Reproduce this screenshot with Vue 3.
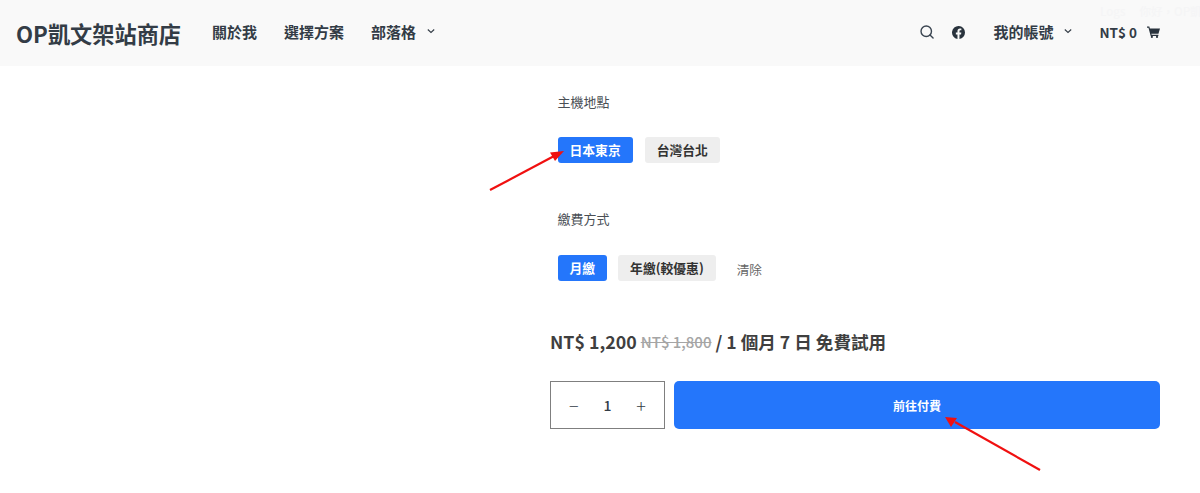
<script setup>
const nav = [
  { label: '關於我' },
  { label: '選擇方案' },
  { label: '部落格', caret: true }
]
</script>

<template>
  <div class="page">
    <header class="header">
      <div class="ghost">Logs<span>你好，OP凱</span></div>
      <div class="brand">OP凱文架站商店</div>
      <nav class="nav">
        <a v-for="item in nav" :key="item.label" class="nav-item">
          {{ item.label }}
          <svg v-if="item.caret" class="caret" viewBox="0 0 8 8"><path d="M.8 2.500 4 5.500 7.200 2.500" fill="none" stroke="currentColor" stroke-width="1.100" /></svg>
        </a>
      </nav>
      <div class="tools">
        <svg class="icon search" viewBox="0 0 15 15"><circle cx="6.700" cy="6.700" r="5.600" fill="none" stroke="#3a4551" stroke-width="1.500" /><path d="M10.700 10.700 14 14" stroke="#3a4551" stroke-width="1.500" stroke-linecap="round" /></svg>
        <svg class="icon fb" viewBox="0 0 24 24"><path fill="#29333d" d="M24 12a12 12 0 1 0-13.900 11.900v-8.400H7.100V12h3V9.400c0-3 1.800-4.700 4.500-4.700 1.300 0 2.700.2 2.700.2v3h-1.500c-1.500 0-2 .9-2 1.900V12h3.400l-.5 3.500h-2.900v8.400A12 12 0 0 0 24 12z" /></svg>
        <a class="nav-item account">我的帳號
          <svg class="caret" viewBox="0 0 8 8"><path d="M.8 2.500 4 5.500 7.200 2.500" fill="none" stroke="currentColor" stroke-width="1.100" /></svg>
        </a>
        <a class="cart">NT$ 0
          <svg class="cart-icon" viewBox="0 0 24 22"><path fill="#29333d" d="M0 1h4.300l1 3.500H24l-2.800 9.500H8l.6 2H21v2.200H6.800L2.700 3.200H0z" /><circle cx="9" cy="20" r="2" fill="#29333d" /><circle cx="18.500" cy="20" r="2" fill="#29333d" /></svg>
        </a>
      </div>
    </header>

    <main class="product">
      <section class="option first">
        <div class="label">主機地點</div>
        <div class="choices">
          <button class="choice active">日本東京</button>
          <button class="choice">台灣台北</button>
        </div>
      </section>
      <section class="option second">
        <div class="label">繳費方式</div>
        <div class="choices">
          <button class="choice active">月繳</button>
          <button class="choice">年繳(較優惠)</button>
          <span class="clear">清除</span>
        </div>
      </section>
      <div class="price">
        <span class="now">NT$ 1,200</span>
        <del>NT$ 1,800</del>
        <span>/ 1 個月 7 日 免費試用</span>
      </div>
      <div class="buy">
        <div class="qty">
          <span class="step">−</span>
          <span class="num">1</span>
          <span class="step">+</span>
        </div>
        <button class="pay">前往付費</button>
      </div>
    </main>

    <svg class="notes" viewBox="0 0 1200 493" width="1200" height="493">
      <g stroke="#f01010" stroke-width="2.200" fill="#f01010">
        <path d="M490 190 556 155" />
        <path stroke="none" d="M564 151 550 152.500 555 161z" />
        <path d="M1040 470 955 422" />
        <path stroke="none" d="M945 417 951 427 957 418z" />
      </g>
    </svg>
  </div>
</template>

<style scoped>
.page {
  position: relative;
  width: 1200px;
  height: 493px;
  overflow: hidden;
  background: #fff;
  font-family: "Noto Sans CJK TC", "Noto Sans", sans-serif;
  color: #3a4551;
}
.header {
  position: relative;
  display: flex;
  align-items: center;
  height: 66px;
  padding: 0 40px 0 16px;
  box-sizing: border-box;
  background: #f9f9f9;
}
.ghost {
  position: absolute;
  top: 3px;
  left: 1100px;
  white-space: nowrap;
  font-size: 11.500px;
  line-height: 16px;
  font-weight: 500;
  color: #f5f5f6;
}
.ghost span { margin-left: 14px; }
.brand {
  font-size: 22.200px;
  line-height: 30px;
  font-weight: 700;
  color: #333c46;
  margin-right: 31px;
  margin-top: -1px;
}
.nav { display: flex; gap: 27px; }
.nav-item {
  display: flex;
  align-items: center;
  margin-top: -2px;
  font-size: 15px;
  line-height: 22px;
  font-weight: 700;
  color: #333c46;
  white-space: nowrap;
}
.caret { width: 8px; height: 8px; margin-left: 11px; margin-top: -3px; }
.tools { display: flex; align-items: center; margin-left: auto; }
.icon { display: block; margin-top: -2px; }
.search { width: 14px; height: 14px; margin-right: 18px; }
.fb { width: 13px; height: 13px; margin-right: 28px; }
.account { margin-right: 27px; }
.cart {
  display: flex;
  align-items: center;
  margin-top: -2px;
  font-size: 13.500px;
  line-height: 20px;
  font-weight: 700;
  color: #333c46;
  white-space: nowrap;
}
.cart-icon { width: 13px; height: 12px; margin-left: 10px; }
.product {
  width: 610px;
  margin-left: 550px;
}
.option { padding-left: 7.500px; }
.first { padding-top: 26px; }
.second { padding-top: 46px; }
.label {
  font-size: 13px;
  line-height: 20px;
  color: #4a4f55;
}
.choices {
  display: flex;
  align-items: center;
  gap: 12px;
  margin-top: 25px;
}
.second .choices { margin-top: 26px; gap: 11px; }
.choice {
  height: 26px;
  padding: 0 12px;
  border: 0;
  border-radius: 3px;
  background: #eeeeee;
  color: #333;
  font: 700 12.800px/26px "Noto Sans CJK TC", sans-serif;
  white-space: nowrap;
}
.choice.active { background: #2476fb; color: #fff; }
.clear {
  margin-left: 10px;
  margin-top: 2px;
  font-size: 12.500px;
  color: #666;
}
.price {
  display: flex;
  align-items: center;
  gap: 4px;
  margin-top: 47px;
  height: 26px;
  font-size: 17.600px;
  font-weight: 700;
  color: #3f3f3f;
  white-space: nowrap;
}
.price .now { font-size: 17.800px; }
.price del { font-size: 15px; font-weight: 500; color: #a5a5a5; }
.buy {
  display: flex;
  gap: 9px;
  margin-top: 27px;
}
.qty {
  display: flex;
  align-items: center;
  justify-content: space-between;
  box-sizing: border-box;
  width: 115px;
  height: 48px;
  padding: 0 18px;
  border: 1px solid #7f7f7f;
  font-size: 14px;
  color: #333c46;
}
.step { font-size: 18px; line-height: 20px; font-weight: 300; }
.num { font-size: 14px; font-weight: 500; }
.pay {
  flex: 1;
  height: 48px;
  border: 0;
  border-radius: 5px;
  background: #2476fb;
  color: #fff;
  font: 700 12px/48px "Noto Sans CJK TC", sans-serif;
}
.notes {
  position: absolute;
  inset: 0;
  pointer-events: none;
}
</style>
